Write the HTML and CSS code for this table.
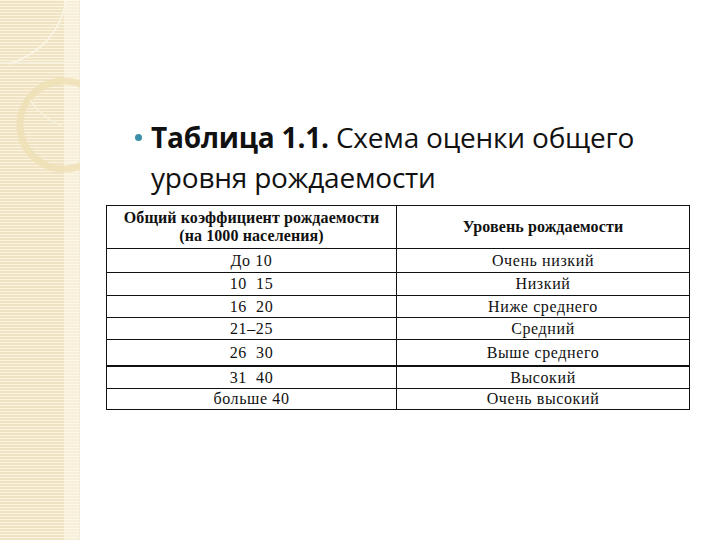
FILE: index.html
```html
<!DOCTYPE html>
<html lang="ru">
<head>
<meta charset="utf-8">
<link rel="stylesheet" href="styles.css">
</head>
<body>
<div class="slide">
  <aside class="band">
    <svg class="deco" width="80" height="200" viewBox="0 0 80 200">
      <rect x="-1" y="-1" width="66" height="64" fill="none" stroke="#f8f2df" stroke-width="1.5"/>
      <path d="M66 0 C 62 30, 40 55, 8 64" fill="none" stroke="#faf5e6" stroke-width="1.5"/>
      <circle cx="64" cy="125" r="44" fill="none" stroke="#efe0b4" stroke-width="7" opacity="0.8"/>
      <path d="M30 100 C 40 115, 55 125, 70 128" fill="none" stroke="#f8f1dc" stroke-width="1.5"/>
    </svg>
  </aside>
  <main class="content">
    <div class="title">
      <span class="bullet"></span>
      <p class="title-text"><b>Таблица 1.1.</b> Схема оценки общего уровня рождаемости</p>
    </div>
    <table class="grid">
      <tr class="head">
        <th class="c1">Общий коэффициент рождаемости<br>(на 1000 населения)</th>
        <th class="c2">Уровень рождаемости</th>
      </tr>
      <tr class="r1"><td>До 10</td><td>Очень низкий</td></tr>
      <tr class="r2"><td>10&nbsp;&nbsp;15</td><td>Низкий</td></tr>
      <tr class="r3"><td>16&nbsp;&nbsp;20</td><td>Ниже среднего</td></tr>
      <tr class="r4"><td>21–25</td><td>Средний</td></tr>
      <tr class="r5"><td>26&nbsp;&nbsp;30</td><td>Выше среднего</td></tr>
      <tr class="r6 thick"><td>31&nbsp;&nbsp;40</td><td>Высокий</td></tr>
      <tr class="r7"><td>больше 40</td><td>Очень высокий</td></tr>
    </table>
  </main>
</div>
</body>
</html>
```
FILE: styles.css
```css
html, body {
  margin: 0;
  padding: 0;
  background: #ffffff;
}
.slide {
  width: 720px;
  height: 540px;
  display: flex;
  overflow: hidden;
}
.band {
  width: 79px;
  flex: none;
  height: 540px;
  position: relative;
  background-color: #efe3c4;
  background-image:
    repeating-linear-gradient(180deg, rgba(255,250,235,0.75) 0px, rgba(255,250,235,0.75) 1px, transparent 1px, transparent 3px),
    linear-gradient(90deg, transparent 0px, transparent 64px, rgba(250,244,226,0.7) 64px, rgba(250,244,226,0.7) 79px);
  border-right: 1px solid #f3ecd9;
}
.deco {
  position: absolute;
  left: 0;
  top: 0;
}
.content {
  flex: 1;
  padding-top: 117px;
}
.title {
  display: flex;
  align-items: flex-start;
  margin-left: 55px;
}
.bullet {
  width: 7px;
  height: 7px;
  border-radius: 50%;
  background: #3b8fa8;
  margin-top: 17px;
  margin-right: 9px;
  flex: none;
}
.title-text {
  margin: 0;
  width: 540px;
  font-family: "Open Sans", "Noto Sans", sans-serif;
  font-size: 28px;
  line-height: 40px;
  color: #111;
  letter-spacing: -0.2px;
}
.title-text b {
  font-weight: 700;
}
.grid {
  margin-top: 8px;
  margin-left: 26px;
  width: 584px;
  border-collapse: collapse;
  font-family: "Liberation Serif", "Times New Roman", serif;
  font-size: 16px;
  color: #111;
  border: 1.5px solid #111;
}
.grid th, .grid td {
  border: 1px solid #111;
  text-align: center;
  padding: 0;
  line-height: 18px;
}
.grid th {
  font-weight: 700;
  font-size: 16px;
  letter-spacing: 0.1px;
}
.grid .c1 { width: 289px; height: 39px; vertical-align: top; padding-top: 3px; }
.grid .head th.c2 { vertical-align: middle; padding-top: 0; }
.grid td { letter-spacing: 0.6px; }
.r1 td { height: 23px; }
.r2 td { height: 22px; }
.r3 td { height: 21px; }
.r4 td { height: 21px; }
.r5 td { height: 25px; }
.r6 td { height: 21px; }
.r7 td { height: 20px; }
.thick td { border-top: 2.5px solid #111; }
```
